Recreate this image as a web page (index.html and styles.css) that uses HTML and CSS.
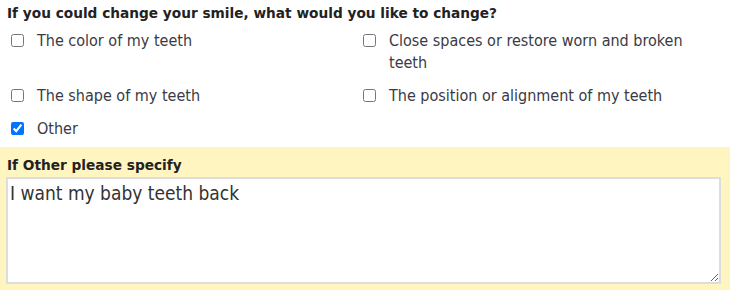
FILE: index.html
```html
<!DOCTYPE html>
<html>
<head>
<title>Smile survey</title>
<link rel="stylesheet" href="styles.css">
</head>
<body>
<div class="question">
	<div class="qlabel">If you could change your smile, what would you like to change?</div>
	<div class="choices">
		<label class="choice"><input type="checkbox"><span>The color of my teeth</span></label>
		<label class="choice"><input type="checkbox"><span>Close spaces or restore worn and broken teeth</span></label>
		<label class="choice"><input type="checkbox"><span>The shape of my teeth</span></label>
		<label class="choice"><input type="checkbox"><span>The position or alignment of my teeth</span></label>
		<label class="choice"><input type="checkbox" checked><span>Other</span></label>
	</div>
</div>
<div class="question other">
	<div class="qlabel">If Other please specify</div>
	<textarea class="answer">I want my baby teeth back</textarea>
</div>
</body>
</html>
```

FILE: styles.css
```css
body {
	margin: 0;
	background-color: #fff;
	color: #333;
}
.question {
	padding: 5px 7px 7px 7px;
}
.qlabel {
	font-family: "DejaVu Sans", Verdana, sans-serif;
	font-weight: bold;
	font-size: 13.7px;
	line-height: 17px;
	color: #222;
}
.choices {
	display: grid;
	grid-template-columns: 352px 1fr;
	row-gap: 11px;
	margin-top: 8px;
}
.choice {
	display: flex;
	align-items: flex-start;
	font-family: "DejaVu Sans", Tahoma, sans-serif;
	font-stretch: semi-condensed;
	font-size: 16px;
	line-height: 22px;
	color: #3a3a45;
}
.choice input {
	margin: 4px 13px 0 4px;
	width: 13px;
	height: 13px;
	flex: none;
}
.choice span {
	padding-right: 20px;
}
.other {
	background-color: #fff5c1;
	padding: 10px 9px 6px 6px;
}
.other .qlabel {
	padding-left: 1px;
	margin-bottom: 3px;
}
.answer {
	display: block;
	box-sizing: border-box;
	width: 100%;
	height: 107px;
	border: 2px solid #ddd;
	padding: 3px 2px;
	font-family: "DejaVu Sans", Tahoma, sans-serif;
	font-stretch: semi-condensed;
	font-size: 19px;
	color: #333;
	background-color: #fff;
}
```
